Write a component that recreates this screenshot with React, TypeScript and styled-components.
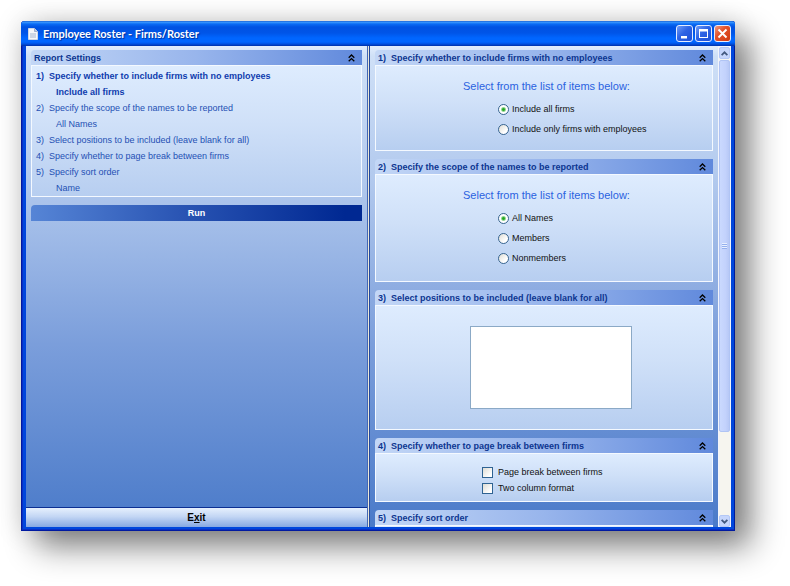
import React, { useRef, useState } from "react";
import styled, { createGlobalStyle, css } from "styled-components";

const GlobalStyle = createGlobalStyle`
  *, *::before, *::after { box-sizing: border-box; }
  body { margin: 0; background: #fff; font-family: "Liberation Sans", Arial, sans-serif; }
  button, input, select { font-family: inherit; margin: 0; }
`;

const Page = styled.div`
  display: flex;
  height: 100vh;
  padding: 21px 55px 55px 21px;
  overflow: hidden;
`;

const AppWindow = styled.main`
  flex: 1;
  min-width: 0;
  display: flex;
  flex-direction: column;
  padding: 0 4px 4px 5px;
  background: #0046dc;
  border-radius: 4px 3px 0 0;
  box-shadow:
    inset 1px -1px 0 #0019a0,
    inset -1px 0 0 #001c9c,
    inset 2px -2px 0 #0a2fc4,
    16px 16px 32px rgba(0, 0, 0, 0.48),
    0 0 28px rgba(0, 0, 0, 0.14);
`;

const TitleBar = styled.header`
  flex: none;
  display: flex;
  align-items: center;
  gap: 5px;
  height: 25px;
  margin: 0 -4px 0 -5px;
  padding: 0 4px 0 7px;
  border-radius: 4px 3px 0 0;
  background: linear-gradient(#0a4fc8 0, #3f9bff 1px, #0a6cf5 3px, #0052e2 6px, #0055e8 12px, #0066ff 17px, #0066ff 21px, #0050e0 23px, #0030a8 25px);
`;

const Title = styled.h1`
  flex: 1;
  margin: 0;
  font: 700 11px/16px Lato, "Noto Sans", sans-serif;
  color: #fff;
  text-shadow: 1px 1px 1px #00309c;
  white-space: nowrap;
`;

const Captions = styled.div`
  display: flex;
  gap: 2px;
`;

const CaptionButton = styled.button<{ $danger?: boolean }>`
  display: grid;
  place-items: center;
  width: 17px;
  height: 17px;
  padding: 0;
  border: 1px solid #e4ecff;
  border-radius: 3px;
  color: #fff;
  background: ${(p) =>
    p.$danger
      ? "linear-gradient(135deg, #f09a80, #e4532c 40%, #cf3a10)"
      : "linear-gradient(135deg, #6f9cf8, #2e63e4 45%, #1c4fd8)"};
`;

const Client = styled.div`
  flex: 1;
  min-height: 0;
  display: grid;
  grid-template-columns: 341fr 3px 361fr;
`;

const paneFill = css`
  background: linear-gradient(#e2eefd 0, #cfe0f7 10px, #b3caee 27%, #7b9edb 62%, #4a7ac9 100%);
`;

const SettingsPane = styled.section`
  display: flex;
  flex-direction: column;
  min-width: 0;
  ${paneFill}
`;

const SettingsContent = styled.div`
  flex: 1;
  display: flex;
  flex-direction: column;
  gap: 8px;
  padding: 4px 5px;
`;

const Splitter = styled.div`
  background: linear-gradient(90deg, #4468b4 1px, #ece9d8 1px, #ece9d8 2px, #24489c 2px);
`;

const OptionsPane = styled.section`
  display: flex;
  min-width: 0;
  min-height: 0;
  ${paneFill}
`;

const OptionsScroll = styled.div`
  flex: 1;
  min-width: 0;
  display: flex;
  flex-direction: column;
  gap: 8px;
  padding: 4px 5px 0 5px;
  overflow: hidden;
`;

const Panel = styled.section`
  flex: none;
`;

const PanelHeader = styled.header`
  display: flex;
  align-items: center;
  height: 15px;
  padding: 0 7px 0 3px;
  border-radius: 4px 0 0 0;
  background: linear-gradient(90deg, #c3d7f6, #98b5ec 50%, #6089dc);
`;

const PanelTitle = styled.h2`
  flex: 1;
  display: flex;
  gap: 5px;
  margin: 0;
  padding-top: 2px;
  font-size: 9px;
  line-height: 15px;
  font-weight: 700;
  color: #0c3590;
  white-space: nowrap;
`;

const CollapseButton = styled.button`
  display: grid;
  place-items: center;
  width: 8px;
  height: 12px;
  padding: 0;
  border: 0;
  background: none;
  color: #000;
`;

const panelFill = css`
  border: 1px solid #f4f9ff;
  background: linear-gradient(#deecfe, #cfe0f8 45%, #b7cef0);
`;

const Summary = styled.ol`
  margin: 0;
  padding: 2px 4px 0;
  list-style: none;
  ${panelFill}
`;

const SummaryItem = styled.li<{ $active?: boolean }>`
  font-size: 9px;
  line-height: 16px;
  font-weight: ${(p) => (p.$active ? 700 : 400)};
  color: ${(p) => (p.$active ? "#0f3cae" : "#2450b4")};
  white-space: nowrap;
`;

const SummaryLine = styled.a`
  display: flex;
  gap: 5px;
  color: inherit;
  text-decoration: none;
`;

const SummaryValue = styled.div`
  padding-left: 20px;
`;

const RunButton = styled.button`
  height: 16px;
  padding: 0;
  border: 0;
  border-radius: 4px 0 0 0;
  font-size: 9px;
  line-height: 16px;
  font-weight: 700;
  color: #fff;
  background: linear-gradient(90deg, #5685d6, #2a55b4 45%, #002892 95%);
`;

const ExitButton = styled.button`
  flex: none;
  height: 20px;
  padding: 0;
  border: 0;
  border-top: 1px solid #0c2f92;
  font-size: 10px;
  line-height: 18px;
  font-weight: 700;
  color: #000;
  background: linear-gradient(#e6f0fd, #c3d6f4 45%, #86a8e2);
`;

const PanelBody = styled.div<{ $size: "small" | "medium" | "large" | "list" }>`
  height: ${(p) => ({ small: 49, medium: 86, large: 108, list: 125 })[p.$size]}px;
  padding-left: 6px;
  ${panelFill}
`;

const Column = styled.div`
  width: 168px;
  margin: 0 auto;
  white-space: nowrap;
`;

const Choices = styled.fieldset`
  min-width: 0;
  margin: 0;
  padding: 12px 0 0;
  border: 0;
`;

const Prompt = styled.legend`
  float: left;
  width: 100%;
  padding: 0;
  font-size: 11px;
  line-height: 16px;
  color: #2a62e0;
`;

const ChoiceList = styled.div`
  clear: both;
  display: flex;
  flex-direction: column;
  gap: 8px;
  padding: 9px 0 0 35px;
`;

const CheckList = styled.div`
  display: flex;
  flex-direction: column;
  gap: 4px;
  padding: 12px 0 0 19px;
`;

const Choice = styled.label<{ $wide?: boolean }>`
  display: flex;
  align-items: center;
  gap: ${(p) => (p.$wide ? 5 : 3)}px;
  height: 12px;
  font-size: 9px;
  line-height: 12px;
  color: #111;
`;

const Radio = styled.input`
  appearance: none;
  flex: none;
  width: 11px;
  height: 11px;
  border: 1px solid #38658f;
  border-radius: 50%;
  background: linear-gradient(135deg, #dedcd4, #fff 70%);
  &:checked {
    background: radial-gradient(circle, #23a323 0, #2fae2f 1px, #fff 3px);
  }
`;

const Check = styled.input`
  appearance: none;
  flex: none;
  width: 11px;
  height: 11px;
  border: 1px solid #2f6392;
  background: linear-gradient(135deg, #dedcd4, #fff 80%);
  &:checked {
    background: #21a121;
    box-shadow: inset 0 0 0 2px #fff;
  }
`;

const PositionList = styled.select`
  display: block;
  width: 162px;
  height: 83px;
  margin: 20px 0 0 7px;
  border: 1px solid #8ba9c6;
  border-radius: 0;
  background: #fff;
  font-size: 9px;
`;

const ScrollBar = styled.div`
  flex: none;
  display: flex;
  flex-direction: column;
  width: 13px;
  border: solid #f3f5fc;
  border-width: 1px 1px 0;
  background: #f6f5ef;
`;

const ScrollButton = styled.button`
  flex: none;
  display: grid;
  place-items: center;
  height: 12px;
  padding: 0;
  border: 1px solid #b4c8f6;
  border-radius: 2px;
  background: #c6d6fc;
  color: #43597f;
`;

const ScrollTrack = styled.div`
  flex: 1;
  padding: 1px 0;
`;

const ScrollThumb = styled.div`
  display: grid;
  place-items: center;
  height: 82%;
  border: 1px solid #b0c4f4;
  border-radius: 2px;
  background: linear-gradient(90deg, #cad9fe, #c3d2fc 60%, #b7c8f6);
`;

const Grip = styled.span`
  width: 5px;
  height: 6px;
  background: repeating-linear-gradient(#e9f0ff 0, #e9f0ff 1px, #94b0ee 1px, #94b0ee 2px);
`;

const DoubleChevron = () => (
  <svg width="7" height="8" viewBox="0 0 7 8" fill="none" stroke="currentColor" strokeWidth="1.3" aria-hidden="true">
    <path d="M.7 3.7 3.5 1l2.8 2.7M.7 7.3l2.8-2.7 2.8 2.7" />
  </svg>
);

const Arrow = ({ down }: { down?: boolean }) => (
  <svg width="7" height="5" viewBox="0 0 7 5" fill="none" stroke="currentColor" strokeWidth="1.8" aria-hidden="true">
    <path d={down ? "M.6.9l2.9 2.8L6.4.9" : "M.6 4.1l2.9-2.8 2.9 2.8"} />
  </svg>
);

const DocumentIcon = () => (
  <svg width="10" height="12" viewBox="0 0 10 12" aria-hidden="true">
    <path d="M.5.5h6l3 3v8h-9z" fill="#f4f6fa" stroke="#cdd6e6" />
    <path d="M6.5.5v3h3" fill="#b9c6dc" stroke="#8fa2c4" strokeWidth=".8" />
    <path d="M2 5h6v5H2z" fill="#ccd5e4" />
  </svg>
);

type PanelProps = {
  number: number;
  title: string;
  size: "small" | "medium" | "large" | "list";
  children?: React.ReactNode;
};

function OptionPanel({ number, title, size, children }: PanelProps) {
  return (
    <Panel id={`option-${number}`}>
      <PanelHeader>
        <PanelTitle>
          <span>{number})</span>
          <span>{title}</span>
        </PanelTitle>
        <CollapseButton type="button" aria-label={`Collapse ${title}`}>
          <DoubleChevron />
        </CollapseButton>
      </PanelHeader>
      <PanelBody $size={size}>
        <Column>{children}</Column>
      </PanelBody>
    </Panel>
  );
}

type RadioProps = {
  name: string;
  options: string[];
  value: string;
  onChange: (value: string) => void;
};

function RadioChoices({ name, options, value, onChange }: RadioProps) {
  return (
    <Choices>
      <Prompt>Select from the list of items below:</Prompt>
      <ChoiceList>
        {options.map((option) => (
          <Choice key={option}>
            <Radio type="radio" name={name} checked={value === option} onChange={() => onChange(option)} />
            {option}
          </Choice>
        ))}
      </ChoiceList>
    </Choices>
  );
}

export default function App() {
  const [firms, setFirms] = useState("Include all firms");
  const [scope, setScope] = useState("All Names");
  const scroller = useRef<HTMLDivElement>(null);
  const scroll = (top: number) => scroller.current?.scrollBy({ top });

  const summary = [
    { title: "Specify whether to include firms with no employees", value: firms, active: true },
    { title: "Specify the scope of the names to be reported", value: scope },
    { title: "Select positions to be included (leave blank for all)" },
    { title: "Specify whether to page break between firms" },
    { title: "Specify sort order", value: "Name" },
  ];

  return (
    <Page>
      <GlobalStyle />
      <AppWindow>
        <TitleBar>
          <DocumentIcon />
          <Title>Employee Roster - Firms/Roster</Title>
          <Captions>
            <CaptionButton type="button" aria-label="Minimize">
              <svg width="13" height="13" viewBox="0 0 13 13" aria-hidden="true">
                <path d="M3 9h6v2.5H3z" fill="currentColor" />
              </svg>
            </CaptionButton>
            <CaptionButton type="button" aria-label="Maximize">
              <svg width="13" height="13" viewBox="0 0 13 13" aria-hidden="true">
                <path d="M2 2h9v9H2zM3 4.5V10h7V4.5z" fill="currentColor" fillRule="evenodd" />
              </svg>
            </CaptionButton>
            <CaptionButton type="button" aria-label="Close" $danger>
              <svg width="13" height="13" viewBox="0 0 13 13" aria-hidden="true">
                <path d="M2.5 2.5l8 8M10.5 2.5l-8 8" stroke="currentColor" strokeWidth="1.9" />
              </svg>
            </CaptionButton>
          </Captions>
        </TitleBar>
        <Client>
          <SettingsPane>
            <SettingsContent>
              <Panel>
                <PanelHeader>
                  <PanelTitle>Report Settings</PanelTitle>
                  <CollapseButton type="button" aria-label="Collapse Report Settings">
                    <DoubleChevron />
                  </CollapseButton>
                </PanelHeader>
                <Summary>
                  {summary.map((item, index) => (
                    <SummaryItem key={item.title} $active={item.active}>
                      <SummaryLine href={`#option-${index + 1}`}>
                        <span>{index + 1})</span>
                        <span>{item.title}</span>
                      </SummaryLine>
                      {item.value && <SummaryValue>{item.value}</SummaryValue>}
                    </SummaryItem>
                  ))}
                </Summary>
              </Panel>
              <RunButton type="button">Run</RunButton>
            </SettingsContent>
            <ExitButton type="button">
              E<u>x</u>it
            </ExitButton>
          </SettingsPane>
          <Splitter />
          <OptionsPane>
            <OptionsScroll ref={scroller}>
              <OptionPanel number={1} title="Specify whether to include firms with no employees" size="medium">
                <RadioChoices
                  name="firms"
                  options={["Include all firms", "Include only firms with employees"]}
                  value={firms}
                  onChange={setFirms}
                />
              </OptionPanel>
              <OptionPanel number={2} title="Specify the scope of the names to be reported" size="large">
                <RadioChoices
                  name="scope"
                  options={["All Names", "Members", "Nonmembers"]}
                  value={scope}
                  onChange={setScope}
                />
              </OptionPanel>
              <OptionPanel number={3} title="Select positions to be included (leave blank for all)" size="list">
                <PositionList multiple aria-label="Positions" />
              </OptionPanel>
              <OptionPanel number={4} title="Specify whether to page break between firms" size="small">
                <CheckList>
                  <Choice $wide>
                    <Check type="checkbox" />
                    Page break between firms
                  </Choice>
                  <Choice $wide>
                    <Check type="checkbox" />
                    Two column format
                  </Choice>
                </CheckList>
              </OptionPanel>
              <OptionPanel number={5} title="Specify sort order" size="medium" />
            </OptionsScroll>
            <ScrollBar>
              <ScrollButton type="button" aria-label="Scroll up" onClick={() => scroll(-40)}>
                <Arrow />
              </ScrollButton>
              <ScrollTrack>
                <ScrollThumb>
                  <Grip />
                </ScrollThumb>
              </ScrollTrack>
              <ScrollButton type="button" aria-label="Scroll down" onClick={() => scroll(40)}>
                <Arrow down />
              </ScrollButton>
            </ScrollBar>
          </OptionsPane>
        </Client>
      </AppWindow>
    </Page>
  );
}
